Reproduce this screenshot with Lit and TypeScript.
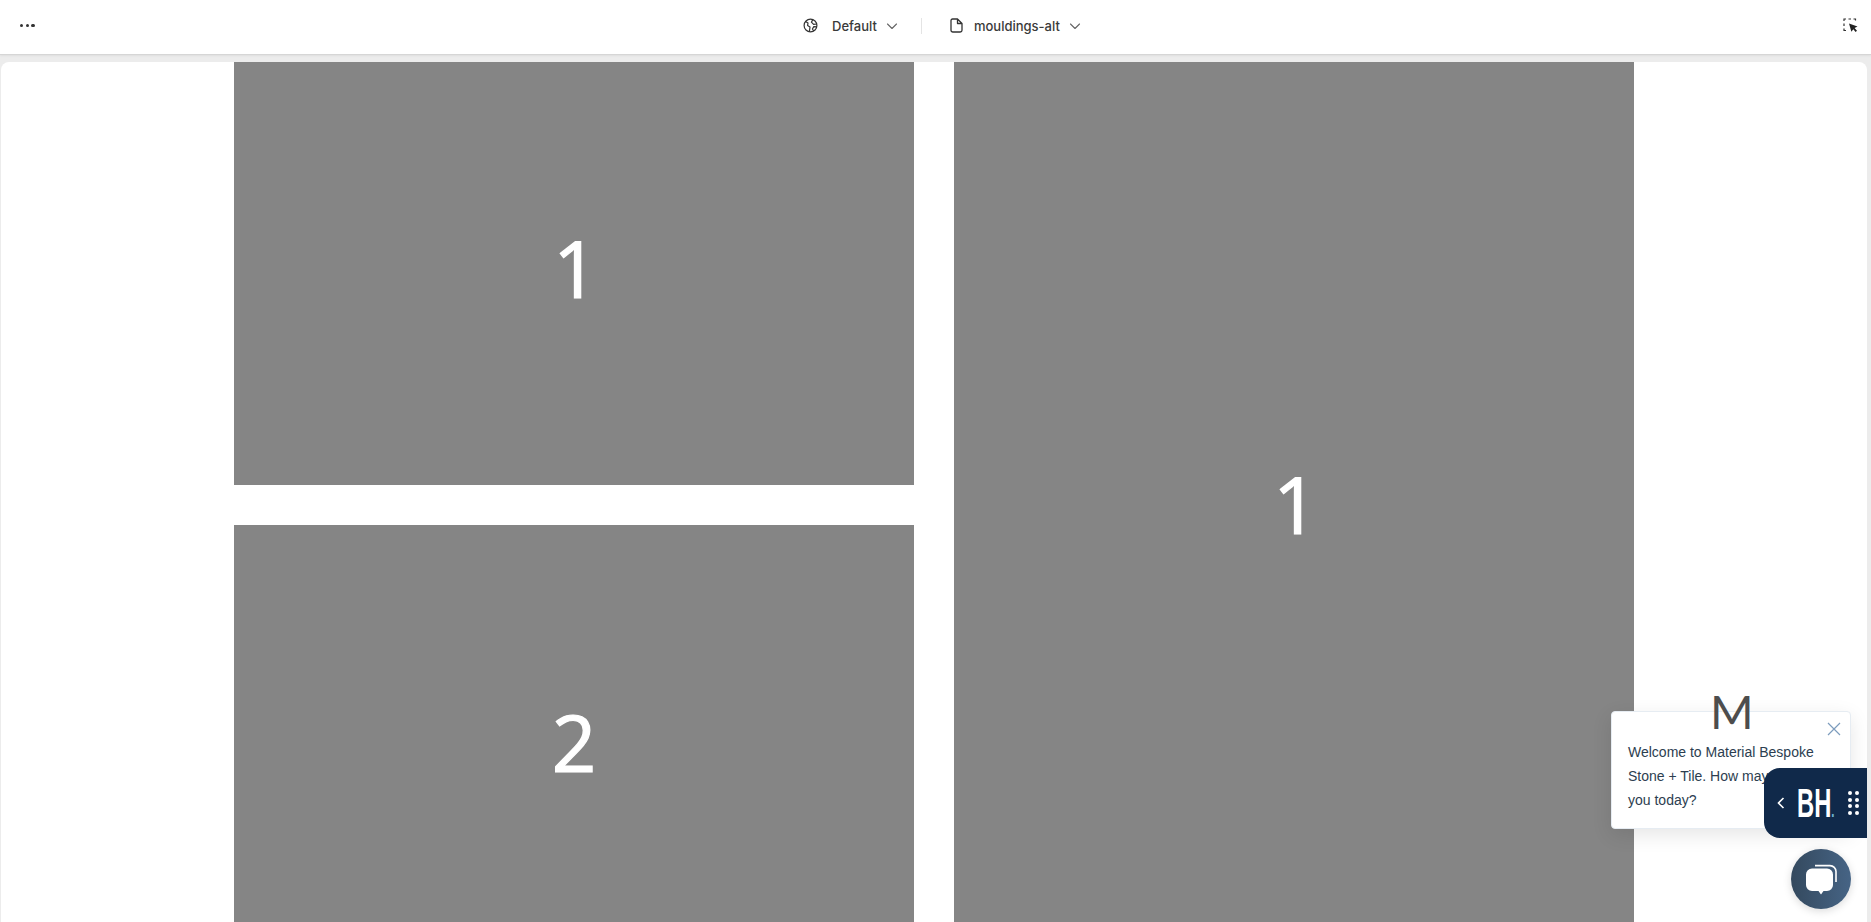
import { LitElement, html, css } from "lit";
import { customElement } from "lit/decorators.js";

const chevron = html`<svg class="chev" width="12" height="12" viewBox="0 0 12 12" fill="none" stroke="#666" stroke-width="1.1" stroke-linecap="round" stroke-linejoin="round"><path d="M1.5 4 L6 8.5 L10.5 4"/></svg>`;

@customElement("app-root")
export class AppRoot extends LitElement {
  static styles = css`
    :host { display: flex; flex-direction: column; height: 922px; width: 1871px; overflow: hidden; background: #ececec; position: relative; font-family: Inter, "Liberation Sans", sans-serif; }
    .top { flex: none; height: 55px; box-sizing: border-box; background: #fff; border-bottom: 1px solid #d6d6d6; box-shadow: 0 1px 2px rgba(0,0,0,.06); display: grid; grid-template-columns: 1fr auto 1fr; align-items: center; padding: 0 13px 3px 20px; color: #3a3a3a; font-size: 13px; font-weight: 500; }
    .dots { display: flex; gap: 2.2px; }
    .dots i { width: 3.4px; height: 3.4px; border-radius: 50%; background: #333; }
    .center { display: flex; align-items: center; margin-left: 6px; }
    .item { display: flex; align-items: center; }
    .item svg.ic { margin-right: 14px; }
    .item .chev { margin-left: 9px; }
    .sep { width: 1px; height: 16px; background: #e4e4e4; margin: 0 28px 0 23px; }
    .file { margin-right: 11px !important; }
    .right { justify-self: end; display: flex; }
    .canvas { flex: 1; margin: 7px 4px 0 1px; background: #fff; border-radius: 8px 8px 0 0; overflow: hidden; min-height: 0; }
    .grid { margin: -10px 0 0 233px; width: 1400px; display: grid; grid-template-columns: 680px 680px; grid-template-rows: 433px 433px; gap: 40px; }
    .panel { background: #858585; color: #fff; display: flex; align-items: center; justify-content: center; font-family: "Open Sans", sans-serif; font-weight: 400; font-size: 78px; line-height: 1; -webkit-text-stroke: 1.2px #fff; }
    .one { padding-left: 3px; padding-bottom: 2px; box-sizing: border-box; }
    .tall { grid-row: 1 / span 2; grid-column: 2; }
    .logo { position: absolute; left: 1710px; top: 683px; font-family: Lato, sans-serif; font-weight: 400; font-size: 47px; line-height: 56px; color: #4d4d4d; z-index: 2; }
    .pop { position: absolute; left: 1611px; top: 711px; width: 240px; height: 118px; box-sizing: border-box; background: #fff; border: 1px solid #e6ecf2; border-radius: 4px; box-shadow: 0 6px 20px rgba(0,0,0,.1); padding: 28px 10px 0 16px; font-family: "Liberation Sans", sans-serif; font-size: 14px; line-height: 24px; color: #2c3e50; }
    .x { position: absolute; right: 8px; top: 9px; }
    .bh { position: absolute; left: 1764px; top: 768px; width: 103px; height: 70px; background: #10294a; border-radius: 16px 0 0 16px; z-index: 3; color: #fff; display: flex; align-items: center; padding: 0 0 0 13px; box-sizing: border-box; }
    .mark { font-family: "Liberation Sans", sans-serif; font-weight: 700; font-size: 41px; line-height: 1; transform: scaleX(.58); transform-origin: left center; margin-left: 12px; width: 36px; white-space: nowrap; }
    .mark span { color: #6fb3d6; font-size: 20px; }
    .grip { display: grid; grid-template-columns: 4px 4px; gap: 2.8px 3px; margin-left: 15px; }
    .grip i { width: 4px; height: 4px; border-radius: 50%; background: #fff; }
    .chat { position: absolute; left: 1791px; top: 849px; width: 60px; height: 60px; border-radius: 50%; background: linear-gradient(90deg, #34495e, #466485); display: flex; align-items: center; justify-content: center; box-shadow: 0 2px 8px rgba(0,0,0,.15); z-index: 2; }
  `;

  render() {
    return html`
      <div class="top">
        <div class="dots"><i></i><i></i><i></i></div>
        <div class="center">
          <div class="item">
            <svg class="ic" width="15" height="15" viewBox="0 0 15 15" fill="none" stroke="#333" stroke-width="1.2" stroke-linejoin="round"><circle cx="7.5" cy="7.5" r="6.4"/><path d="M2.6 3.4 L5 5 L4.6 7.4 L7 9 L6.4 13.6 M9.8 1.6 L8.4 4.2 L10.6 6.4 L13.8 6 M14 8.8 L10.8 8.6 L9.4 11 L10.8 13"/></svg>
            <span>Default</span>${chevron}
          </div>
          <div class="sep"></div>
          <div class="item">
            <svg class="ic file" width="13" height="15" viewBox="0 0 13 15" fill="none" stroke="#333" stroke-width="1.3" stroke-linejoin="round"><path d="M2.5 1 H7.5 L12 5.5 V12.2 A1.8 1.8 0 0 1 10.2 14 H2.8 A1.8 1.8 0 0 1 1 12.2 V2.5 A1.5 1.5 0 0 1 2.5 1 Z M7.5 1 V5.5 H12"/></svg>
            <span>mouldings-alt</span>${chevron}
          </div>
        </div>
        <div class="right">
          <svg width="15" height="15" viewBox="0 0 15 15" fill="none"><path d="M1 3 V1 H3 M5.5 1 H8 M10.5 1 H12.5 V2.5 M1 5.5 V8 M1 10.5 V12.5 H3" stroke="#333" stroke-width="1.2"/><path d="M6 5.5 L14.5 8.5 L11.6 10 L14 12.8 L12.6 14 L10.3 11.2 L8.4 13.8 Z" fill="#222"/></svg>
        </div>
      </div>
      <div class="canvas">
        <div class="grid">
          <div class="panel one">1</div>
          <div class="panel tall one">1</div>
          <div class="panel">2</div>
        </div>
      </div>
      <div class="pop">
        <svg class="x" width="16" height="16" viewBox="0 0 16 16" fill="none" stroke="#7d9cbd" stroke-width="1.2"><path d="M2 2 L14 14 M14 2 L2 14"/></svg>
        Welcome to Material Bespoke<br />Stone + Tile. How may I help<br />you today?
      </div>
      <div class="logo">M</div>
      <div class="bh">
        <svg width="8" height="12" viewBox="0 0 8 12" fill="none" stroke="#fff" stroke-width="1.6"><path d="M6.5 1 L1.5 6 L6.5 11"/></svg>
        <div class="mark">BH<span>.</span></div>
        <div class="grip"><i></i><i></i><i></i><i></i><i></i><i></i><i></i><i></i></div>
      </div>
      <div class="chat">
        <svg width="34" height="34" viewBox="0 0 34 34"><path d="M11 3.6 H26 A6 6 0 0 1 32 9.6 V20" fill="none" stroke="#fff" stroke-width="1.6"/><path d="M8 6.5 H23 A6 6 0 0 1 29 12.5 V23 A6 6 0 0 1 23 29 H19.5 L17 32.5 L14.5 29 H8 A6 6 0 0 1 2 23 V12.5 A6 6 0 0 1 8 6.5 Z" fill="#fff"/></svg>
      </div>
    `;
  }
}
